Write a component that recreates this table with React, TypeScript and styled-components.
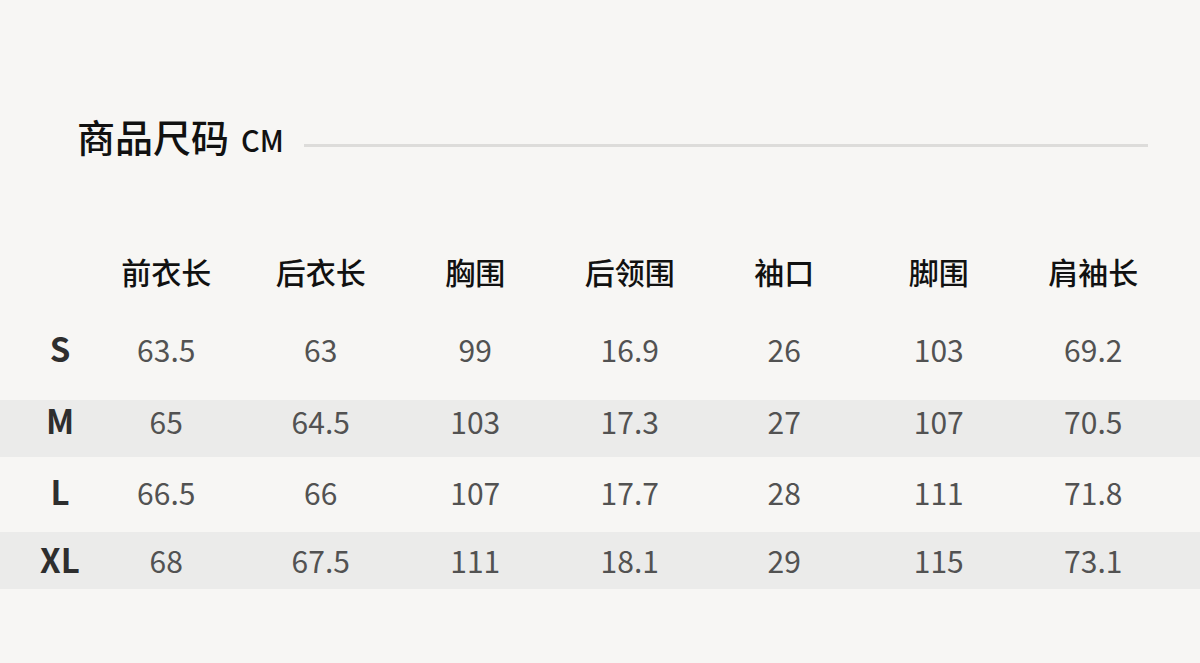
import React from 'react'
import styled, { createGlobalStyle } from 'styled-components'

const GlobalStyle = createGlobalStyle`
    html, body {
        margin: 0;
        padding: 0;
        background: #f7f6f4;
    }
    body {
        font-family: 'Noto Sans CJK SC', 'Noto Sans', sans-serif;
    }
`

const Page = styled.div`
    width: 1200px;
    height: 663px;
    padding-top: 106px;
    box-sizing: border-box;
    background: #f7f6f4;
    overflow: hidden;
`

const TitleBar = styled.div`
    display: flex;
    align-items: center;
    height: 60px;
    padding: 0 52px 0 77px;
`

const Title = styled.h1`
    margin: 0;
    font-size: 38px;
    font-weight: 500;
    line-height: 1;
    color: #111;
`

const Unit = styled.span`
    margin-left: 12px;
    font-size: 29px;
    font-weight: 500;
    color: #111;
`

const Rule = styled.div`
    flex: 1;
    height: 3px;
    margin: 19px 0 0 20px;
    background: #dddcda;
`

const Table = styled.div`
    margin-top: 79px;
`

const Row = styled.div<{ $height: number; $lift?: number; $striped?: boolean }>`
    display: grid;
    grid-template-columns: 89px repeat(7, 154.5px);
    align-items: center;
    box-sizing: border-box;
    height: ${({ $height }) => $height}px;
    padding-bottom: ${({ $lift = 0 }) => $lift * 2}px;
    background: ${({ $striped }) => ($striped ? '#ebebea' : 'transparent')};
`

const SizeLabel = styled.div`
    padding-left: 31px;
    text-align: center;
    font-size: 33px;
    font-weight: 700;
    color: #2e2e2e;
    line-height: 1;
`

const HeadCell = styled.div`
    text-align: center;
    font-size: 30px;
    font-weight: 500;
    color: #111;
    line-height: 1;
`

const Cell = styled.div`
    text-align: center;
    font-size: 30px;
    font-weight: 400;
    color: #525252;
    line-height: 1;
`

const columns = ['前衣长', '后衣长', '胸围', '后领围', '袖口', '脚围', '肩袖长']

const rows = [
    { size: 'S', height: 99, lift: 2, values: ['63.5', '63', '99', '16.9', '26', '103', '69.2'] },
    { size: 'M', height: 57, lift: 8, striped: true, values: ['65', '64.5', '103', '17.3', '27', '107', '70.5'] },
    { size: 'L', height: 75, lift: 3, values: ['66.5', '66', '107', '17.7', '28', '111', '71.8'] },
    { size: 'XL', height: 57, lift: 1, striped: true, values: ['68', '67.5', '111', '18.1', '29', '115', '73.1'] }
]

export default function App() {
    return (
        <>
            <GlobalStyle />
            <Page>
                <TitleBar>
                    <Title>
                        商品尺码<Unit>CM</Unit>
                    </Title>
                    <Rule />
                </TitleBar>
                <Table>
                    <Row $height={56} $lift={2}>
                        <div />
                        {columns.map(c => (
                            <HeadCell key={c}>{c}</HeadCell>
                        ))}
                    </Row>
                    {rows.map(r => (
                        <Row key={r.size} $height={r.height} $lift={r.lift} $striped={r.striped}>
                            <SizeLabel>{r.size}</SizeLabel>
                            {r.values.map((v, i) => (
                                <Cell key={i}>{v}</Cell>
                            ))}
                        </Row>
                    ))}
                </Table>
            </Page>
        </>
    )
}
